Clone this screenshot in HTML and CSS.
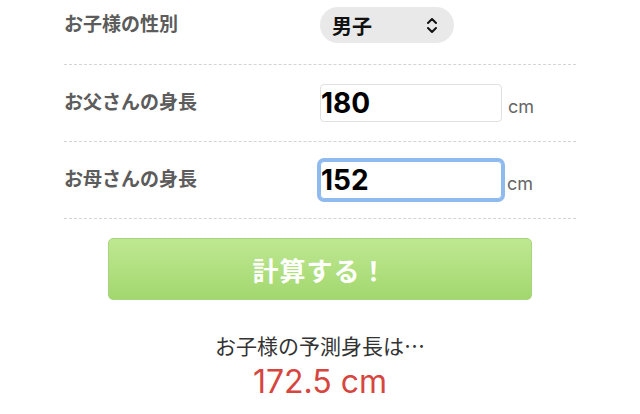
FILE: index.html
```html
<!DOCTYPE html>
<html lang="ja">
<head>
    <meta charset="UTF-8">
    <meta name="viewport" content="width=device-width, initial-scale=1.0">
    <title>子どもの身長予測</title>
    <link rel="stylesheet" href="styles.css">
</head>
<body>
    <form class="calc" id="heightForm">
        <div class="row">
            <label class="row-label" for="sex">お子様の性別</label>
            <div class="field">
                <div class="select-wrap">
                    <select id="sex" name="sex" class="select">
                        <option value="boy" selected>男子</option>
                        <option value="girl">女子</option>
                    </select>
                    <!-- up/down chevron -->
                    <svg class="select-arrow" width="12" height="17" viewBox="0 0 12 17" fill="none" stroke="#111" stroke-width="2" stroke-linecap="round" stroke-linejoin="round">
                        <path d="M2 6 L6 2 L10 6"/>
                        <path d="M2 11 L6 15 L10 11"/>
                    </svg>
                </div>
            </div>
        </div>

        <div class="row">
            <label class="row-label" for="father">お父さんの身長</label>
            <div class="field">
                <input type="text" id="father" name="father" class="num-input" value="180">
                <span class="unit">cm</span>
            </div>
        </div>

        <div class="row">
            <label class="row-label" for="mother">お母さんの身長</label>
            <div class="field">
                <input type="text" id="mother" name="mother" class="num-input is-focused" value="152">
                <span class="unit unit-tight">cm</span>
            </div>
        </div>

        <button type="submit" class="calc-btn">計算する！</button>

        <div class="result">
            <p class="result-label">お子様の予測身長は…</p>
            <p class="result-value">172.5 cm</p>
        </div>
    </form>
</body>
</html>
```

FILE: styles.css
```css
body {
    margin: 0;
    background: #fff;
    font-family: "Noto Sans CJK JP", "Noto Sans", sans-serif;
    color: #333;
}

.calc {
    margin: -12px 64px 0;
}

.row {
    display: grid;
    grid-template-columns: 256px 1fr;
    align-items: center;
    padding: 19px 0;
    border-bottom: 1px dashed #d4d4d4;
}

.row:first-child {
    padding-top: 18px;
    padding-bottom: 20px;
}

.row-label {
    padding-bottom: 5px;
    font-size: 19px;
    font-weight: bold;
    color: #5c5c5c;
}

.field {
    display: flex;
    align-items: baseline;
    min-height: 38px;
}

.select-wrap {
    position: relative;
    width: 134px;
    align-self: center;
}

.select {
    appearance: none;
    -webkit-appearance: none;
    width: 100%;
    height: 36px;
    padding: 0 12px;
    border: none;
    border-radius: 18px;
    background: #e9e9e9;
    font-family: "Noto Sans CJK JP", sans-serif;
    font-size: 20px;
    font-weight: bold;
    color: #111;
}

.select-arrow {
    position: absolute;
    top: 10px;
    right: 16px;
}

.num-input {
    box-sizing: border-box;
    width: 182px;
    height: 38px;
    padding: 0;
    border: 1px solid #e0e0e0;
    border-radius: 4px;
    font-family: Inter, "Liberation Sans", sans-serif;
    font-size: 28px;
    font-weight: bold;
    color: #000;
}

.num-input:focus,
.num-input.is-focused {
    outline: none;
    border-color: #8fbaee;
    box-shadow: 0 0 0 3px #8fbaee;
}

.unit {
    margin-left: 6px;
    font-family: Inter, "Liberation Sans", sans-serif;
    font-size: 18px;
    color: #666;
}

.unit-tight {
    margin-left: 5px;
}

.calc-btn {
    display: block;
    width: calc(100% - 88px);
    height: 62px;
    margin: 19px 44px 0;
    border: 1px solid #a8d57f;
    border-radius: 5px;
    background: linear-gradient(#bfe892, #a2d76e);
    font-family: "Noto Sans CJK JP", sans-serif;
    font-size: 26px;
    font-weight: bold;
    letter-spacing: 1px;
    color: #fff;
    cursor: pointer;
}

.result {
    margin-top: 30px;
    text-align: center;
}

.result-label {
    margin: 0;
    font-size: 21px;
    line-height: 30px;
    color: #333;
}

.result-value {
    margin: 2px 0 0;
    font-family: Inter, "Liberation Sans", sans-serif;
    font-size: 32px;
    line-height: 40px;
    color: #d6463f;
}
```
